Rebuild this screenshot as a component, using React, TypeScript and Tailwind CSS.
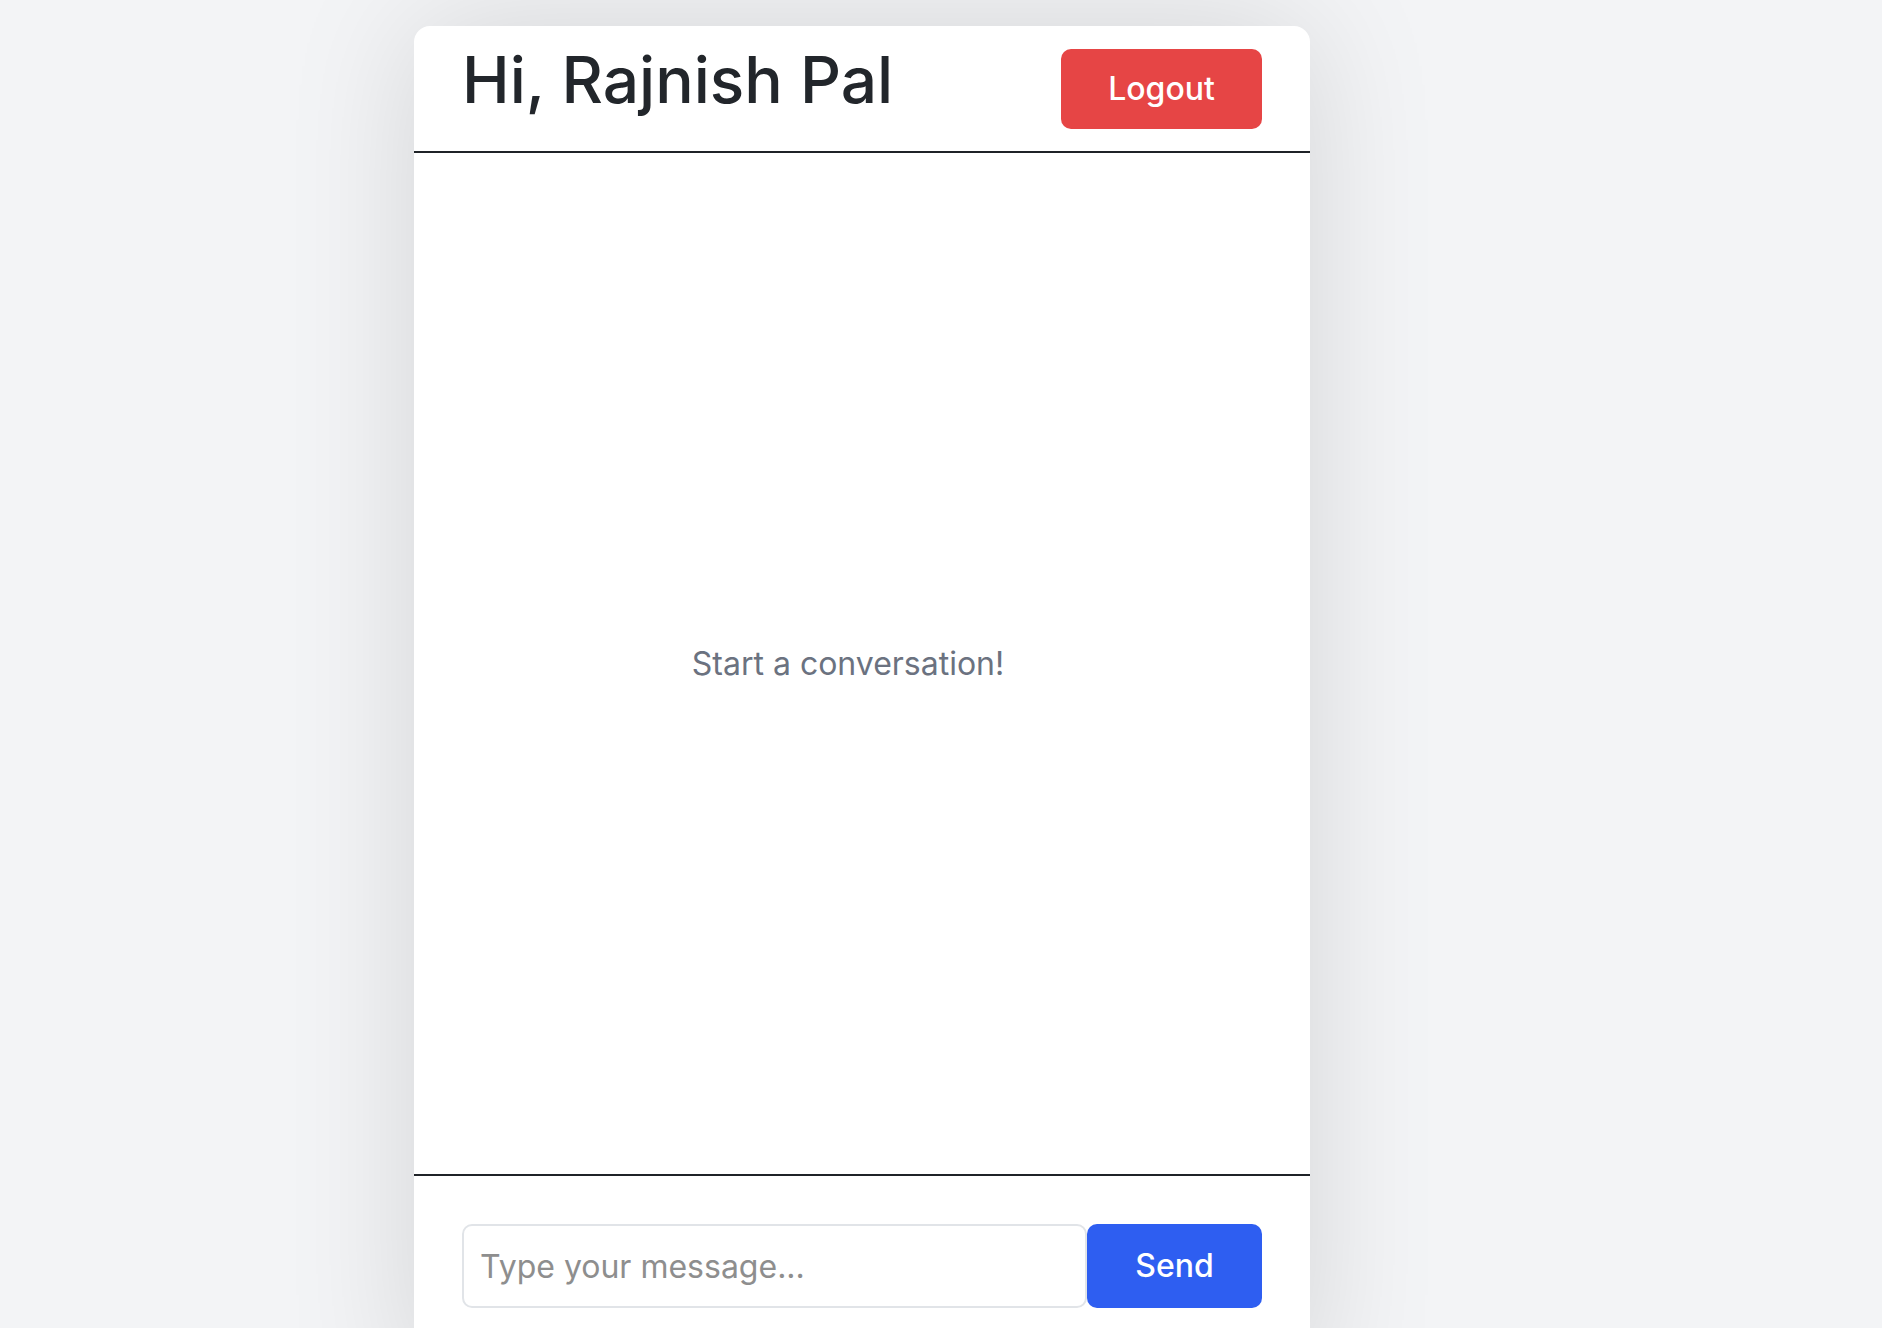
export default function App() {
  return (
    <div
      className="h-[1328px] overflow-hidden bg-[#f3f4f6] pl-[414px] pt-[26px]"
      style={{ fontFamily: 'Inter, "Noto Sans", sans-serif' }}
    >
      <div className="flex h-[1360px] w-[896px] flex-col rounded-t-2xl bg-white shadow-[0_0_130px_rgba(0,0,0,0.13)]">
        {/* Header */}
        <header className="flex h-[127px] shrink-0 items-center justify-between border-b-2 border-[#1f2328] px-12">
          <h1 className="mb-[18px] text-[64px] leading-none font-medium text-[#22262b]">Hi, Rajnish Pal</h1>
          <button className="h-[80px] w-[201px] rounded-[10px] bg-[#e64545] text-[32px] font-medium text-white">
            Logout
          </button>
        </header>

        {/* Messages */}
        <div className="flex h-[1023px] shrink-0 items-center justify-center border-b-2 border-[#1f2328] pr-[28px]">
          <p className="text-[32px] text-[#6b7280]">Start a conversation!</p>
        </div>

        {/* Composer */}
        <div className="flex px-12 pt-12">
          <input
            type="text"
            placeholder="Type your message..."
            className="h-[84px] flex-1 rounded-[10px] border-2 border-[#e1e4e8] px-[16px] text-[32px] outline-none placeholder:text-[#8e8e8e]"
          />
          <button className="h-[84px] w-[175px] rounded-[10px] bg-[#2e5ef1] text-[32px] font-medium text-white">
            Send
          </button>
        </div>
      </div>
    </div>
  );
}
